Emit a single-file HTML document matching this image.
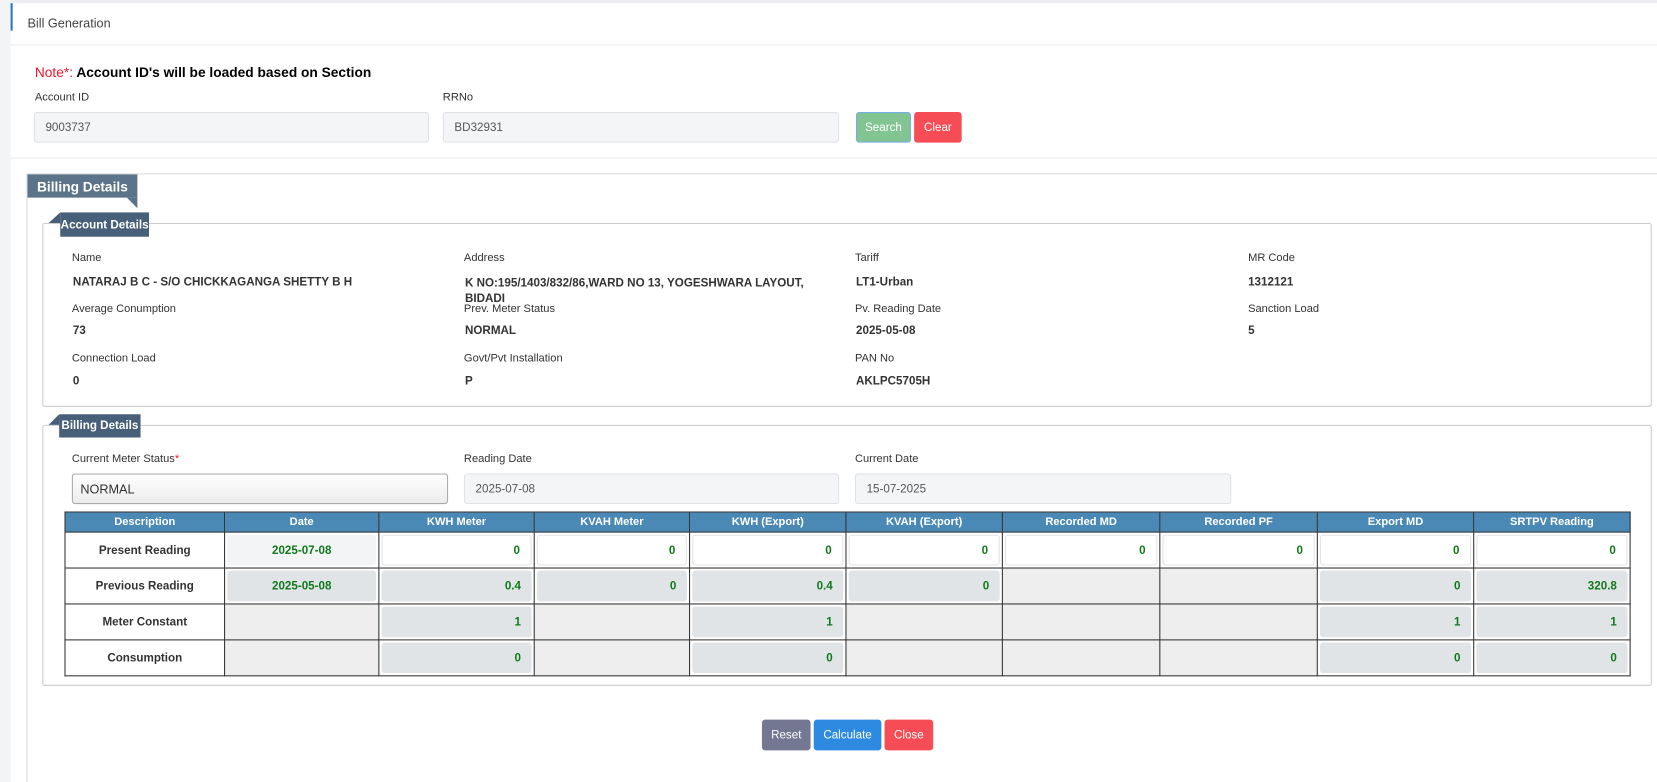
<!DOCTYPE html>
<html><head><meta charset="utf-8">
<style>
*{box-sizing:border-box;margin:0;padding:0}
html,body{width:1657px;height:782px;overflow:hidden;background:#fff;font-family:"Liberation Sans",Arial,sans-serif;}
#w{position:absolute;left:0;top:0;width:1568px;height:740px;transform:scale(1.0568);transform-origin:0 0;background:#fff}
.a{position:absolute}
.lbl{position:absolute;font-size:10.5px;color:#333}
.val{position:absolute;font-size:11px;font-weight:bold;color:#333}
.inp{position:absolute;background:#f4f5f7;border:1px solid #dfe2e6;border-radius:3px;font-size:11px;color:#555;padding-left:10px;display:flex;align-items:center}
.btn{position:absolute;color:#fff;font-size:11px;display:flex;align-items:center;justify-content:center;border-radius:3px}
table{position:absolute;left:61px;top:484px;border-collapse:collapse;width:1481px;table-layout:fixed}
td,th{border:1px solid #333;font-size:11px;font-weight:bold}
th{background:#4a89b6;color:#fff;height:19px;font-size:10.5px}
td{height:34px;padding:2px;color:#333;text-align:center;background:#eee}
td div{height:100%;border-radius:3px;text-align:right;padding-right:10px;display:flex;align-items:center;justify-content:flex-end;color:#107a1a}
td.d{background:#fff}
.w{background:#fff;border:1px solid #e2e4e7}
.g{background:#e1e4e7}
.dt div{justify-content:center;padding:0}
.tab{position:absolute;color:#fff;font-weight:bold;display:flex;align-items:center;justify-content:center}
</style></head><body><div id="w">
<div class="a" style="left:0;top:0;width:1568px;height:3px;background:#eceef1"></div>
<div class="a" style="left:0;top:0;width:10px;height:740px;background:#f3f4f6"></div>
<div class="a" style="left:10px;top:3px;width:2px;height:26px;background:#2c79c2"></div>
<div class="a" style="left:26px;top:15px;font-size:12px;color:#444">Bill Generation</div>
<div class="a" style="left:10px;top:42px;width:1558px;height:1px;background:#e8e9eb"></div>
<div class="a" style="left:33px;top:61px;font-size:13px;font-weight:bold;color:#000"><span style="color:#f0142c;font-weight:normal">Note*:</span> Account ID's will be loaded based on Section</div>
<div class="lbl" style="left:33px;top:86px">Account ID</div>
<div class="lbl" style="left:419px;top:86px">RRNo</div>
<div class="inp" style="left:32px;top:106px;width:374px;height:29px">9003737</div>
<div class="inp" style="left:419px;top:106px;width:375px;height:29px">BD32931</div>
<div class="btn" style="left:810px;top:106px;width:52px;height:29px;background:#82c593;border:1px solid #76aee0">Search</div>
<div class="btn" style="left:865px;top:106px;width:45px;height:29px;background:#f64c55">Clear</div>
<div class="a" style="left:10px;top:149px;width:1558px;height:1px;background:#e8e9eb"></div>
<div class="a" style="left:25px;top:164px;width:1543px;height:576px;border-left:1px solid #ddd;border-top:1px solid #ddd"></div>
<div class="tab" style="left:26px;top:165px;width:104px;height:22px;background:#5b7489;font-size:13px">Billing Details</div>
<div class="a" style="left:120px;top:187px;width:0;height:0;border-top:10px solid #5b7489;border-left:10px solid transparent"></div>
<!-- account details -->
<div class="a" style="left:40px;top:211px;width:1523px;height:174px;border:1px solid #ccc;border-radius:2px"></div>
<div class="tab" style="left:57px;top:201px;width:84px;height:23px;background:#475f78;font-size:11px">Account Details</div>
<div class="a" style="left:46px;top:201px;width:0;height:0;border-bottom:10px solid #475f78;border-left:11px solid transparent"></div>
<div class="lbl" style="left:68px;top:238px">Name</div>
<div class="lbl" style="left:439px;top:238px">Address</div>
<div class="lbl" style="left:809px;top:238px">Tariff</div>
<div class="lbl" style="left:1181px;top:238px">MR Code</div>
<div class="val" style="left:69px;top:261px">NATARAJ B C - S/O CHICKKAGANGA SHETTY B H</div>
<div class="val" style="left:440px;top:261px;width:340px;line-height:15px">K NO:195/1403/832/86,WARD NO 13, YOGESHWARA LAYOUT, BIDADI</div>
<div class="val" style="left:810px;top:261px">LT1-Urban</div>
<div class="val" style="left:1181px;top:261px">1312121</div>
<div class="lbl" style="left:68px;top:286px">Average Conumption</div>
<div class="lbl" style="left:439px;top:286px">Prev. Meter Status</div>
<div class="lbl" style="left:809px;top:286px">Pv. Reading Date</div>
<div class="lbl" style="left:1181px;top:286px">Sanction Load</div>
<div class="val" style="left:69px;top:307px">73</div>
<div class="val" style="left:440px;top:307px">NORMAL</div>
<div class="val" style="left:810px;top:307px">2025-05-08</div>
<div class="val" style="left:1181px;top:307px">5</div>
<div class="lbl" style="left:68px;top:333px">Connection Load</div>
<div class="lbl" style="left:439px;top:333px">Govt/Pvt Installation</div>
<div class="lbl" style="left:809px;top:333px">PAN No</div>
<div class="val" style="left:69px;top:355px">0</div>
<div class="val" style="left:440px;top:355px">P</div>
<div class="val" style="left:810px;top:355px">AKLPC5705H</div>
<!-- billing details -->
<div class="a" style="left:40px;top:402px;width:1523px;height:247px;border:1px solid #ccc;border-radius:2px"></div>
<div class="tab" style="left:56px;top:392px;width:77px;height:22px;background:#475f78;font-size:11px">Billing Details</div>
<div class="a" style="left:46px;top:392px;width:0;height:0;border-bottom:10px solid #475f78;border-left:10px solid transparent"></div>
<div class="lbl" style="left:68px;top:428px">Current Meter Status<span style="color:#f0142c">*</span></div>
<div class="lbl" style="left:439px;top:428px">Reading Date</div>
<div class="lbl" style="left:809px;top:428px">Current Date</div>
<div class="inp" style="left:68px;top:448px;width:356px;height:29px;background:linear-gradient(#fff,#ececec);border:1px solid #aaa;color:#333;padding-left:7px;font-size:12px">NORMAL</div>
<div class="inp" style="left:439px;top:448px;width:355px;height:29px">2025-07-08</div>
<div class="inp" style="left:809px;top:448px;width:356px;height:29px">15-07-2025</div>
<table>
<colgroup><col style="width:151px"><col style="width:146px"><col style="width:147px"><col style="width:147px"><col style="width:148px"><col style="width:148px"><col style="width:149px"><col style="width:149px"><col style="width:148px"><col style="width:148px"></colgroup>
<tr><th>Description</th><th>Date</th><th>KWH Meter</th><th>KVAH Meter</th><th>KWH (Export)</th><th>KVAH (Export)</th><th>Recorded MD</th><th>Recorded PF</th><th>Export MD</th><th>SRTPV Reading</th></tr>
<tr><td class="d">Present Reading</td><td class="d dt"><div style="background:#f3f4f6">2025-07-08</div></td><td class="d"><div class="w">0</div></td><td class="d"><div class="w">0</div></td><td class="d"><div class="w">0</div></td><td class="d"><div class="w">0</div></td><td class="d"><div class="w">0</div></td><td class="d"><div class="w">0</div></td><td class="d"><div class="w">0</div></td><td class="d"><div class="w">0</div></td></tr>
<tr><td class="d">Previous Reading</td><td class="d dt"><div class="g">2025-05-08</div></td><td class="d"><div class="g">0.4</div></td><td class="d"><div class="g">0</div></td><td class="d"><div class="g">0.4</div></td><td class="d"><div class="g">0</div></td><td></td><td></td><td class="d"><div class="g">0</div></td><td class="d"><div class="g">320.8</div></td></tr>
<tr><td class="d">Meter Constant</td><td></td><td class="d"><div class="g">1</div></td><td></td><td class="d"><div class="g">1</div></td><td></td><td></td><td></td><td class="d"><div class="g">1</div></td><td class="d"><div class="g">1</div></td></tr>
<tr><td class="d" style="height:29px">Consumption</td><td></td><td class="d"><div class="g">0</div></td><td></td><td class="d"><div class="g">0</div></td><td></td><td></td><td></td><td class="d"><div class="g">0</div></td><td class="d"><div class="g">0</div></td></tr>
</table>
<div class="btn" style="left:721px;top:681px;width:46px;height:29px;background:#737791">Reset</div>
<div class="btn" style="left:770px;top:681px;width:64px;height:29px;background:#2d8ae0">Calculate</div>
<div class="btn" style="left:837px;top:681px;width:46px;height:29px;background:#f64c55">Close</div>
</div></body></html>
